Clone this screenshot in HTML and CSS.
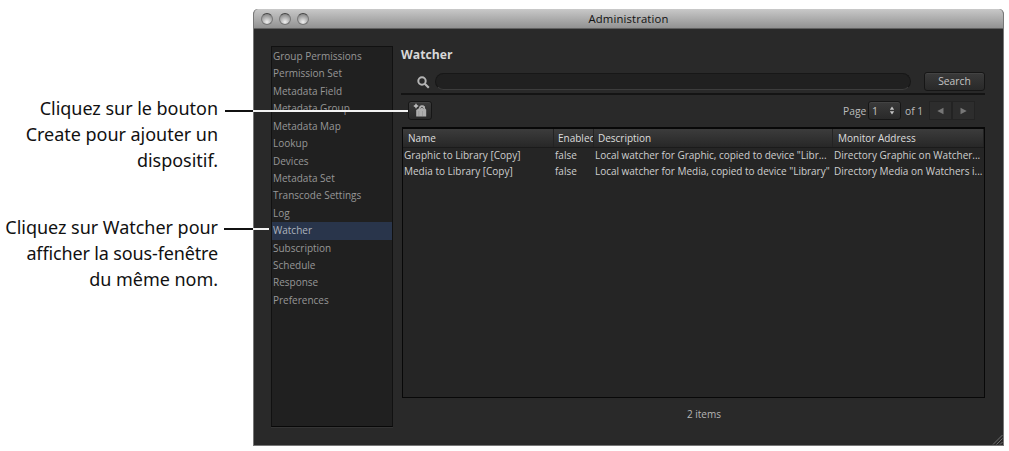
FILE: index.html
```
<!DOCTYPE html>
<html lang="fr">
<head>
  <meta charset="UTF-8" />
  <meta name="viewport" content="width=device-width, initial-scale=1.0"/>
  <title>Administration</title>
  <link rel="stylesheet" href="styles.css">
</head>
<body>
  <div class="figure">
    <div class="callouts">
      <p class="callout">Cliquez sur le bouton<br>Create pour ajouter un<br>dispositif.</p>
      <p class="callout">Cliquez sur Watcher pour<br><span class="tight">afficher la sous-fenêtre</span><br>du même nom.</p>
    </div>

    <div class="window">
      <div class="titlebar">
        <div class="lights"><i></i><i></i><i></i></div>
        <span class="title">Administration</span>
      </div>

      <div class="content">
        <ul class="sidebar">
          <li>Group Permissions</li>
          <li>Permission Set</li>
          <li>Metadata Field</li>
          <li>Metadata Group</li>
          <li>Metadata Map</li>
          <li>Lookup</li>
          <li>Devices</li>
          <li>Metadata Set</li>
          <li>Transcode Settings</li>
          <li>Log</li>
          <li class="selected">Watcher</li>
          <li>Subscription</li>
          <li>Schedule</li>
          <li>Response</li>
          <li>Preferences</li>
        </ul>

        <div class="main">
          <h2>Watcher</h2>
          <div class="search">
            <svg class="magnifier" width="13" height="13" viewBox="0 0 13 13">
              <circle cx="5" cy="5" r="3.7" fill="none" stroke="#b4b4b4" stroke-width="2"/>
              <path d="M7.8 7.8L11.8 11.8" stroke="#b4b4b4" stroke-width="2.2"/>
            </svg>
            <div class="field"></div>
            <button class="btn search-btn">Search</button>
          </div>

          <div class="toolbar">
            <button class="btn create">
              <svg width="15" height="15" viewBox="0 0 15 15">
                <path d="M3 0.8V5.2M0.8 3H5.2" stroke="#c4c4c4" stroke-width="1.4"/>
                <path d="M3.2 7L5.6 5.6L6.6 3.2L8 2.2H10.2L12 3.6V5.2L13.2 6.8V13.5H3.2Z" fill="#adadad"/>
                <path d="M7.6 5.4L9 4L10.4 5.6" fill="none" stroke="#555" stroke-width="0.9"/>
                <path d="M5.8 8V13M9.5 8V13" stroke="#939393" stroke-width="0.7"/>
              </svg>
            </button>
            <div class="pager">
              <span class="page">Page</span>
              <button class="btn select">1
                <svg width="6" height="9" viewBox="0 0 6 9"><path d="M3 0.5L5.2 3.7H0.8ZM3 8.5L5.2 5.3H0.8Z" fill="#c4c4c4"/></svg>
              </button>
              <span class="of">of 1</span>
              <div class="arrows">
                <button><svg width="7" height="8" viewBox="0 0 7 8"><path d="M6.5 0.7V7.3L0.3 4Z" fill="#777"/></svg></button>
                <button><svg width="7" height="8" viewBox="0 0 7 8"><path d="M0.5 0.7V7.3L6.7 4Z" fill="#777"/></svg></button>
              </div>
            </div>
          </div>

          <div class="table">
            <div class="row head">
              <span>Name</span><span>Enabled</span><span>Description</span><span>Monitor Address</span>
            </div>
            <div class="row">
              <span>Graphic to Library [Copy]</span><span>false</span><span>Local watcher for Graphic, copied to device "Libr...</span><span>Directory Graphic on Watcher...</span>
            </div>
            <div class="row">
              <span>Media to Library [Copy]</span><span>false</span><span>Local watcher for Media, copied to device "Library"</span><span>Directory Media on Watchers i...</span>
            </div>
          </div>
          <div class="count">2 items</div>
        </div>
      </div>
      <svg class="grip" width="11" height="11" viewBox="0 0 11 11"><path d="M1 10.5L10.5 1M4.5 10.5L10.5 4.5M8 10.5L10.5 8" stroke="#777" stroke-width="0.9"/></svg>
    </div>

    <div class="leader leader-create"></div>
    <div class="leader leader-watcher"></div>
  </div>
</body>
</html>
```

FILE: styles.css
```
* {
  box-sizing: border-box;
}

body {
  margin: 0;
  background: #fff;
  font-family: "Open Sans", "Noto Sans", sans-serif;
  overflow: hidden;
}

.figure {
  position: relative;
  display: flex;
  width: 1009px;
  height: 451px;
}

.callouts {
  width: 253px;
  padding: 95px 35px 0 0;
}

.callout {
  margin: 0 0 41px;
  font-family: "Noto Sans", sans-serif;
  font-size: 18px;
  line-height: 26px;
  letter-spacing: -0.03px;
  text-align: right;
  white-space: nowrap;
  color: #111;
}

.callout .tight {
  letter-spacing: -0.14px;
}

.window {
  position: relative;
  width: 751px;
  height: 437px;
  margin-top: 9px;
  background: #292929;
  border: 1px solid #777;
  border-top: none;
  border-radius: 5px 5px 0 0;
  overflow: hidden;
}

.titlebar {
  display: flex;
  align-items: center;
  height: 20px;
  margin: 0 -1px;
  background: linear-gradient(#c9c9c9, #b8b8b8 30%, #929292);
  border-bottom: 1px solid #606060;
}

.lights {
  display: flex;
  gap: 6px;
  width: 100px;
  padding-left: 8px;
}

.lights i {
  width: 12px;
  height: 12px;
  border-radius: 50%;
  border: 1px solid #777;
  border-top-color: #444;
  background: radial-gradient(circle at 50% 80%, #f0f0f0, #b0b0b0 50%, #737373);
}

.title {
  width: 551px;
  text-align: center;
  font-size: 11.3px;
  line-height: 16px;
  color: #111;
  letter-spacing: 0.15px;
  padding-top: 1px;
}

.content {
  display: flex;
  padding: 17px 18px 0 17px;
}

.sidebar {
  width: 123px;
  height: 381px;
  margin: 0 8px 0 0;
  padding: 1px 0;
  list-style: none;
  background: #202020;
  border: 1px solid #111;
  border-bottom-color: #080808;
  box-shadow: 0 1px 0 #353535;
  font-size: 10px;
  color: #979797;
}

.sidebar li {
  height: 17.43px;
  padding-left: 1px;
  line-height: 17.4px;
  white-space: nowrap;
}

.sidebar .selected {
  background: #29354b;
  color: #aeb4bd;
}

.main {
  width: 584px;
}

h2 {
  height: 26px;
  margin: 0;
  font-size: 12.2px;
  line-height: 17px;
  color: #d8d8d8;
}

.search {
  display: flex;
  align-items: flex-start;
  height: 23px;
  border-bottom: 2px solid #141414;
}

.magnifier {
  margin: 4px 5px 0 16px;
}

.field {
  width: 476px;
  height: 17px;
  margin: 1px 13px 0 0;
  background: #202020;
  border: 1px solid #171717;
  border-bottom-color: #3c3c3c;
  border-radius: 9px;
}

.btn {
  padding: 0;
  font-family: inherit;
  color: #c4c4c4;
  background: linear-gradient(#3a3a3a, #292929);
  border: 1px solid #161616;
  border-radius: 3px;
  box-shadow: inset 0 1px 0 #434343;
}

.search-btn {
  width: 61px;
  height: 19px;
  font-size: 10.3px;
  line-height: 17px;
}

.toolbar {
  display: flex;
  justify-content: space-between;
  height: 32px;
  padding: 6px 10px 0 7px;
}

.create {
  display: flex;
  align-items: center;
  justify-content: center;
  width: 24px;
  height: 19px;
}

.pager {
  display: flex;
  height: 19px;
  font-size: 10.3px;
  line-height: 20px;
  color: #bcbcbc;
}

.page {
  width: 25px;
}

.select {
  display: flex;
  align-items: center;
  justify-content: space-between;
  width: 33px;
  height: 19px;
  padding: 0 5px 0 3px;
  font-size: 10.5px;
}

.of {
  width: 28px;
  padding-left: 4px;
}

.arrows {
  display: flex;
  width: 46px;
}

.arrows button {
  display: flex;
  align-items: center;
  justify-content: center;
  width: 23px;
  height: 19px;
  padding: 0;
  background: #2d2d2d;
  border: 1px solid #232323;
}

.table {
  height: 271px;
  margin-left: 1px;
  background: #252525;
  border: 1px solid #080808;
  border-top-width: 2px;
}

.row {
  display: grid;
  grid-template-columns: 151px 40px 239px 151px;
  height: 15.7px;
  font-size: 10px;
  line-height: 15.7px;
  color: #cfcfcf;
}

.row span {
  padding-left: 1px;
  overflow: hidden;
  white-space: nowrap;
}

.row span:nth-child(3) {
  letter-spacing: -0.02px;
}

.head {
  height: 19px;
  line-height: 18px;
  background: linear-gradient(#3c3c3c, #272727);
  border-bottom: 1px solid #1b1b1b;
  color: #dedede;
}

.head span {
  padding-left: 5px;
  border-right: 1px solid #232323;
}

.head span:nth-child(2),
.head span:nth-child(3) {
  padding-left: 4px;
}

.count {
  padding: 8px 0 0 22px;
  text-align: center;
  font-size: 10px;
  line-height: 16px;
  color: #b5b5b5;
}

.grip {
  position: absolute;
  right: 0;
  bottom: 0;
}

/* leader lines turn white where they cross the window */
.leader {
  position: absolute;
  height: 2px;
}

.leader-create {
  left: 225px;
  top: 110px;
  width: 183px;
  background: linear-gradient(to right, #111 28px, #f2f2f2 28px);
}

.leader-watcher {
  left: 224px;
  top: 228px;
  width: 45px;
  background: linear-gradient(to right, #111 29px, #f2f2f2 29px);
}
```
